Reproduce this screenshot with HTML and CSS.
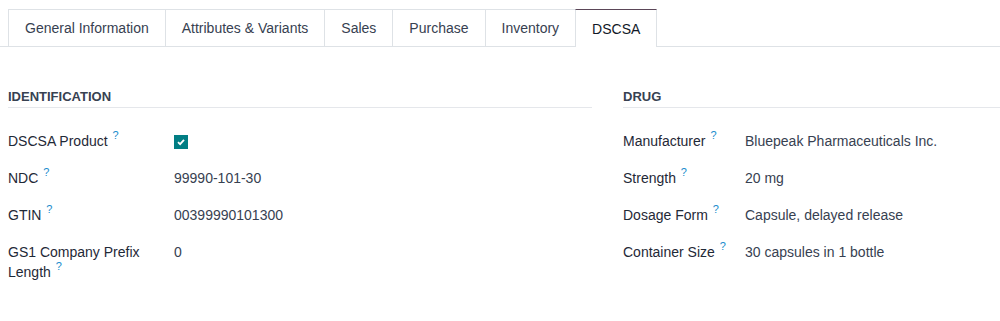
FILE: index.html
```html
<!DOCTYPE html>
<html>
<head>
<meta charset="utf-8">
<link rel="stylesheet" href="styles.css">
</head>
<body>
<div class="tabs">
  <div class="tab">General Information</div>
  <div class="tab">Attributes &amp; Variants</div>
  <div class="tab">Sales</div>
  <div class="tab">Purchase</div>
  <div class="tab">Inventory</div>
  <div class="tab active">DSCSA</div>
</div>
<div class="groups">
  <div class="group">
    <div class="group-title">Identification</div>
    <div class="rows rows-left">
      <div class="label">DSCSA Product <sup class="help">?</sup></div>
      <div class="value"><span class="checkbox"><svg width="10" height="10" viewBox="0 0 10 10"><path d="M2 5.2 L4.1 7.2 L8 2.8" fill="none" stroke="#fff" stroke-width="1.8"/></svg></span></div>
      <div class="label">NDC <sup class="help">?</sup></div>
      <div class="value">99990-101-30</div>
      <div class="label">GTIN <sup class="help">?</sup></div>
      <div class="value">00399990101300</div>
      <div class="label">GS1 Company Prefix Length <sup class="help">?</sup></div>
      <div class="value">0</div>
    </div>
  </div>
  <div class="group">
    <div class="group-title">Drug</div>
    <div class="rows rows-right">
      <div class="label">Manufacturer <sup class="help">?</sup></div>
      <div class="value">Bluepeak Pharmaceuticals Inc.</div>
      <div class="label">Strength <sup class="help">?</sup></div>
      <div class="value">20 mg</div>
      <div class="label">Dosage Form <sup class="help">?</sup></div>
      <div class="value">Capsule, delayed release</div>
      <div class="label">Container Size <sup class="help">?</sup></div>
      <div class="value">30 capsules in 1 bottle</div>
    </div>
  </div>
</div>
</body>
</html>
```
FILE: styles.css
```css
html, body {
  margin: 0;
  padding: 0;
  background: #fff;
}
body {
  font-family: "Liberation Sans", Arial, sans-serif;
  font-size: 14px;
  color: #212529;
  overflow: hidden;
}
.tabs {
  display: flex;
  margin-top: 9px;
  padding-left: 8px;
  border-bottom: 1px solid #dee2e6;
}
.tab {
  height: 36px;
  display: flex;
  align-items: center;
  padding: 0 16px;
  border: 1px solid #dee2e6;
  border-bottom: none;
  margin-left: -1px;
  color: #374151;
  background: #fff;
}
.tab:first-child {
  margin-left: 0;
}
.tab.active {
  border-top-color: #5b4658;
  color: #111827;
  margin-bottom: -1px;
  height: 37px;
}
.groups {
  display: grid;
  grid-template-columns: 584px 1fr;
  column-gap: 31px;
  padding-left: 8px;
  margin-top: 40px;
}
.group-title {
  font-weight: bold;
  font-size: 13px;
  text-transform: uppercase;
  color: #374151;
  line-height: 20px;
  border-bottom: 1px solid #e5e7eb;
}
.rows {
  display: grid;
  margin-top: 23px;
  line-height: 20px;
  row-gap: 17px;
}
.rows-left {
  grid-template-columns: 166px 1fr;
}
.rows-right {
  grid-template-columns: 122px 1fr;
}
.label {
  color: #1f2937;
  padding-right: 16px;
}
.value {
  color: #374151;
}
.help {
  color: #1a8ccd;
  font-size: 11px;
  vertical-align: top;
  position: relative;
  top: -6px;
  margin-left: 1px;
}
.checkbox {
  display: inline-flex;
  align-items: center;
  justify-content: center;
  width: 14px;
  height: 14px;
  background: #017e84;
  margin-top: 4px;
  vertical-align: top;
}
```
